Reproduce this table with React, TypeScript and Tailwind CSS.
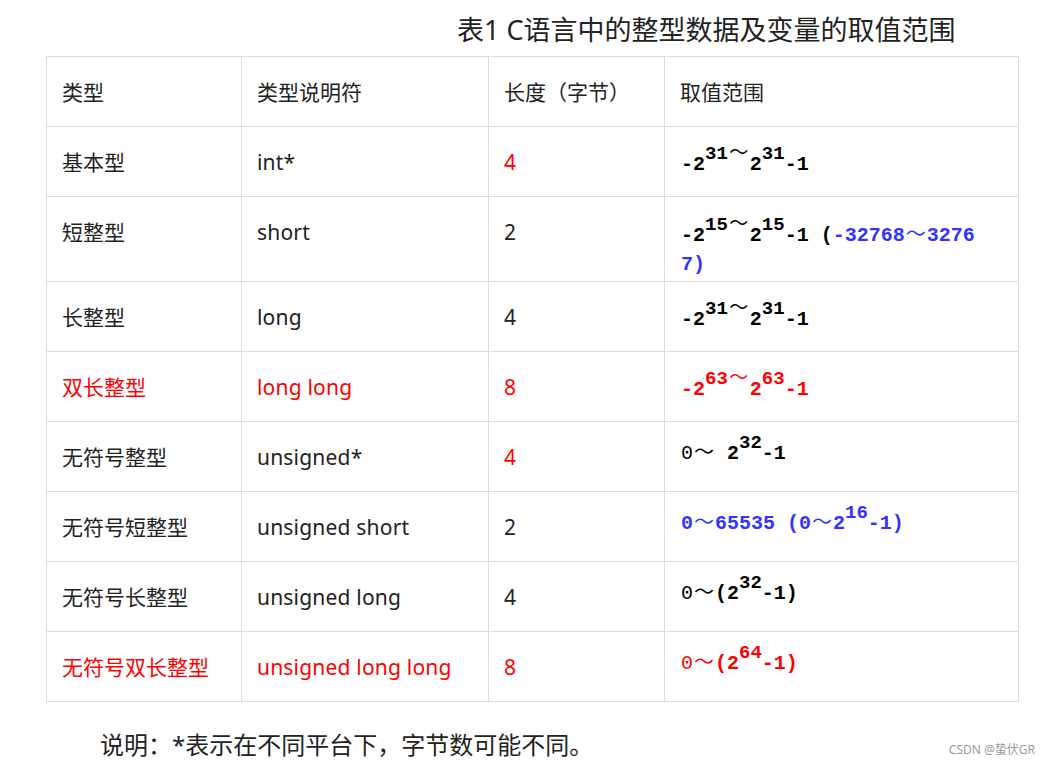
import React from 'react';

const BORDER = 'border border-[#dddddd]';
const CELL_BASE = `${BORDER} align-top pb-[3px] leading-[27px]`;
const CELL = `${CELL_BASE} pt-[22px] px-[15px]`;

function Sup({ children }: { children: React.ReactNode }) {
  return (
    <sup className="relative -top-[11px] align-baseline text-[19px] leading-none">{children}</sup>
  );
}

function Tilde() {
  return (
    <span className="inline-block w-[22px] text-center font-normal font-['Noto_Sans_CJK_SC',sans-serif]">～</span>
  );
}

function Mono({ children, className = '' }: { children: React.ReactNode; className?: string }) {
  return (
    <span className={`font-['Liberation_Mono','Noto_Sans_CJK_SC',monospace] font-bold text-[20px] ${className}`}>
      {children}
    </span>
  );
}

interface Row {
  type: string;
  spec: string;
  size: string;
  range: React.ReactNode;
  red?: boolean;
  redSize?: boolean;
  high?: boolean; // range text sits a little higher in these rows
}

const ROWS: Row[] = [
  {
    type: '基本型',
    spec: 'int*',
    size: '4',
    redSize: true,
    range: (
      <Mono className="text-black">
        -2<Sup>31<Tilde /></Sup>2<Sup>31</Sup>-1
      </Mono>
    )
  },
  {
    type: '短整型',
    spec: 'short',
    size: '2',
    range: (
      <>
        <Mono className="text-black whitespace-nowrap">
          -2<Sup>15<Tilde /></Sup>2<Sup>15</Sup>-1 (
          <span className="text-[#3333ff]">-32768<Tilde />3276</span>
        </Mono>
        <br />
        <Mono className="text-[#3333ff]">7)</Mono>
      </>
    )
  },
  {
    type: '长整型',
    spec: 'long',
    size: '4',
    range: (
      <Mono className="text-black">
        -2<Sup>31<Tilde /></Sup>2<Sup>31</Sup>-1
      </Mono>
    )
  },
  {
    type: '双长整型',
    spec: 'long long',
    size: '8',
    red: true,
    range: (
      <Mono className="text-[#ff0000]">
        -2<Sup>63<Tilde /></Sup>2<Sup>63</Sup>-1
      </Mono>
    )
  },
  {
    type: '无符号整型',
    spec: 'unsigned*',
    size: '4',
    redSize: true,
    high: true,
    range: (
      <Mono className="text-black">
        <span className="font-normal">0</span><Tilde /> 2<Sup>32</Sup>-1
      </Mono>
    )
  },
  {
    type: '无符号短整型',
    spec: 'unsigned short',
    size: '2',
    high: true,
    range: (
      <Mono className="text-[#3333ff]">
        0<Tilde />65535 (0<Tilde />2<Sup>16</Sup>-1)
      </Mono>
    )
  },
  {
    type: '无符号长整型',
    spec: 'unsigned long',
    size: '4',
    high: true,
    range: (
      <Mono className="text-black">
        <span className="font-normal">0</span><Tilde />(2<Sup>32</Sup>-1)
      </Mono>
    )
  },
  {
    type: '无符号双长整型',
    spec: 'unsigned long long',
    size: '8',
    red: true,
    high: true,
    range: (
      <Mono className="text-[#ff0000]">
        <span className="font-normal">0</span><Tilde />(2<Sup>64</Sup>-1)
      </Mono>
    )
  }
];

export default function App(): JSX.Element {
  return (
    <div className="relative w-[1050px] h-[767px] overflow-hidden bg-white text-[#222222] font-['Noto_Sans','Noto_Sans_CJK_SC',sans-serif]">
      <h1 className="pl-[457px] pt-[12px] mb-[8px] text-[27px] leading-[36px] font-normal">
        表1 C语言中的整型数据及变量的取值范围
      </h1>

      <table className="ml-[46px] w-[972px] table-fixed border-collapse text-[21px]">
        <colgroup>
          <col className="w-[195px]" />
          <col className="w-[247px]" />
          <col className="w-[176px]" />
          <col className="w-[354px]" />
        </colgroup>
        <tbody>
          <tr className="h-[70px]">
            <td className={CELL}>类型</td>
            <td className={CELL}>类型说明符</td>
            <td className={CELL}>长度（字节）</td>
            <td className={CELL}>取值范围</td>
          </tr>
          {ROWS.map((row) => (
            <tr key={row.type} className={`h-[70px] ${row.red ? 'text-[#ff0000]' : ''}`}>
              <td className={CELL}>{row.type}</td>
              <td className={`${CELL} tracking-[0.2px]`}>{row.spec}</td>
              <td className={`${CELL} ${row.redSize ? 'text-[#ff0000]' : ''}`}>{row.size}</td>
              <td className={`${CELL_BASE} pl-[16px] pr-[15px] ${row.high ? 'pt-[15px]' : 'pt-[22px]'}`}>
                {row.range}
              </td>
            </tr>
          ))}
        </tbody>
      </table>

      <p className="ml-[100px] mt-[27px] text-[24px] leading-[32px]">
        说明：*表示在不同平台下，字节数可能不同。
      </p>

      <span className="absolute right-[15px] bottom-[8px] text-[12px] text-[#999999]">CSDN @蛰伏GR</span>
    </div>
  );
}
